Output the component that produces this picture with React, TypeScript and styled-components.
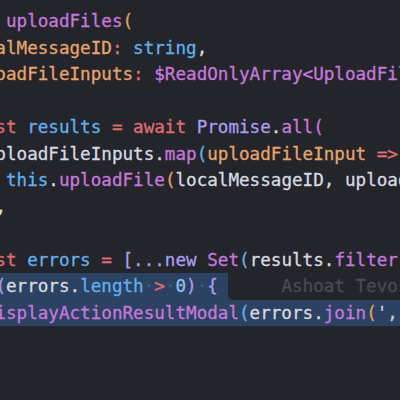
import React from "react";
import styled, { createGlobalStyle } from "styled-components";

const Global = createGlobalStyle`
  html, body { margin: 0; padding: 0; background: #23252b; }
`;

const palette: Record<string, string> = {
  txt: "#d7dae0",
  kw: "#e06c75",
  fn: "#c678dd",
  lav: "#a79ef0",
  blue: "#61afef",
  num: "#8cc2f2",
  prm: "#e5a46b",
  org: "#e0a060",
  str: "#c8ccd4",
};

type Tok = [string, keyof typeof palette];

const lines: { toks: Tok[]; selected?: boolean; blame?: string }[] = [
  { toks: [["async ", "kw"], ["uploadFiles", "fn"], ["(", "org"]] },
  { toks: [["  localMessageID", "prm"], [": ", "kw"], ["string", "blue"], [",", "txt"]] },
  {
    toks: [
      ["  uploadFileInputs", "prm"],
      [": ", "kw"],
      ["$ReadOnlyArray<UploadFileInput>", "fn"],
      [",", "txt"],
    ],
  },
  { toks: [[")", "org"], [" {", "fn"]] },
  {
    toks: [
      ["  const ", "kw"],
      ["results", "blue"],
      [" = ", "kw"],
      ["await ", "kw"],
      ["Promise", "lav"],
      [".", "txt"],
      ["all", "fn"],
      ["(", "fn"],
    ],
  },
  {
    toks: [
      ["    uploadFileInputs", "txt"],
      [".", "txt"],
      ["map", "fn"],
      ["(", "blue"],
      ["uploadFileInput", "prm"],
      [" =>", "kw"],
    ],
  },
  {
    toks: [
      ["      this", "blue"],
      [".", "txt"],
      ["uploadFile", "fn"],
      ["(", "org"],
      ["localMessageID, uploadFileInput", "txt"],
      [")", "org"],
      [",", "txt"],
    ],
  },
  { toks: [["    )", "blue"], [",", "txt"]] },
  { toks: [["  )", "fn"], [";", "txt"]] },
  {
    toks: [
      ["  const ", "kw"],
      ["errors", "blue"],
      [" = ", "kw"],
      ["[...new ", "lav"],
      ["Set", "fn"],
      ["(", "blue"],
      ["results", "txt"],
      [".", "txt"],
      ["filter", "fn"],
      ["(", "org"],
      ["Boolean", "lav"],
      [")))];", "txt"],
    ],
  },
  {
    selected: true,
    blame: "Ashoat Tevosyan, 2 years ago • Upload files",
    toks: [
      ["  if ", "kw"],
      ["(", "lav"],
      ["errors", "txt"],
      [".", "txt"],
      ["length", "blue"],
      [" ", "txt"],
      [">", "kw"],
      [" ", "txt"],
      ["0", "num"],
      [")", "lav"],
      [" ", "txt"],
      ["{", "lav"],
    ],
  },
  {
    selected: true,
    toks: [
      ["    displayActionResultModal", "fn"],
      ["(", "blue"],
      ["errors", "txt"],
      [".", "txt"],
      ["join", "fn"],
      ["(", "org"],
      ["', '", "str"],
      [") + ", "txt"],
      ["' :('", "str"],
      [");", "txt"],
    ],
  },
  { toks: [["  }", "lav"]] },
  { toks: [["}", "org"]] },
  { toks: [] },
];

const Editor = styled.div`
  width: 400px;
  height: 400px;
  overflow: hidden;
  background: #23252b;
  font-family: "DejaVu Sans Mono", "Liberation Mono", monospace;
  font-size: 17.6px;
  -webkit-text-stroke: 0.3px currentColor;
`;

const Code = styled.div`
  margin-left: -57.6px;
  padding-top: 8px;
  width: 520px;
  display: flex;
  flex-direction: column;
`;

const Line = styled.div<{ $selected?: boolean }>`
  display: flex;
  height: 26.5px;
  line-height: 26.5px;
  white-space: pre;
  background: ${(p) => (p.$selected ? "#2c4263" : "transparent")};
`;

const Tk = styled.span<{ $c: string }>`
  color: ${(p) => p.$c};
`;

const Ws = styled.span`
  color: #4d5d77;
  -webkit-text-stroke: 0;
`;

const Eol = styled.span`
  width: 1ch;
  flex: none;
`;

const Blame = styled.span`
  flex: 1 0 auto;
  padding-left: 5ch;
  background: #23252b;
  border-bottom-left-radius: 5px;
  color: #484c55;
`;

function renderTok(t: Tok, i: number, selected?: boolean) {
  const [text, c] = t;
  if (!selected || !text.includes(" ") || c === "str") {
    return <Tk key={i} $c={palette[c]}>{text}</Tk>;
  }
  const parts = text.split(/( )/);
  return (
    <React.Fragment key={i}>
      {parts.map((p, j) =>
        p === " " ? (
          <Ws key={j}>·</Ws>
        ) : p ? (
          <Tk key={j} $c={palette[c]}>{p}</Tk>
        ) : null
      )}
    </React.Fragment>
  );
}

export default function App() {
  return (
    <>
      <Global />
      <Editor>
        <Code>
          {lines.map((l, i) => (
            <Line key={i} $selected={l.selected}>
              {l.toks.map((t, j) => renderTok(t, j, l.selected))}
              {l.blame && (
                <>
                  <Eol />
                  <Blame>{l.blame}</Blame>
                </>
              )}
            </Line>
          ))}
        </Code>
      </Editor>
    </>
  );
}
